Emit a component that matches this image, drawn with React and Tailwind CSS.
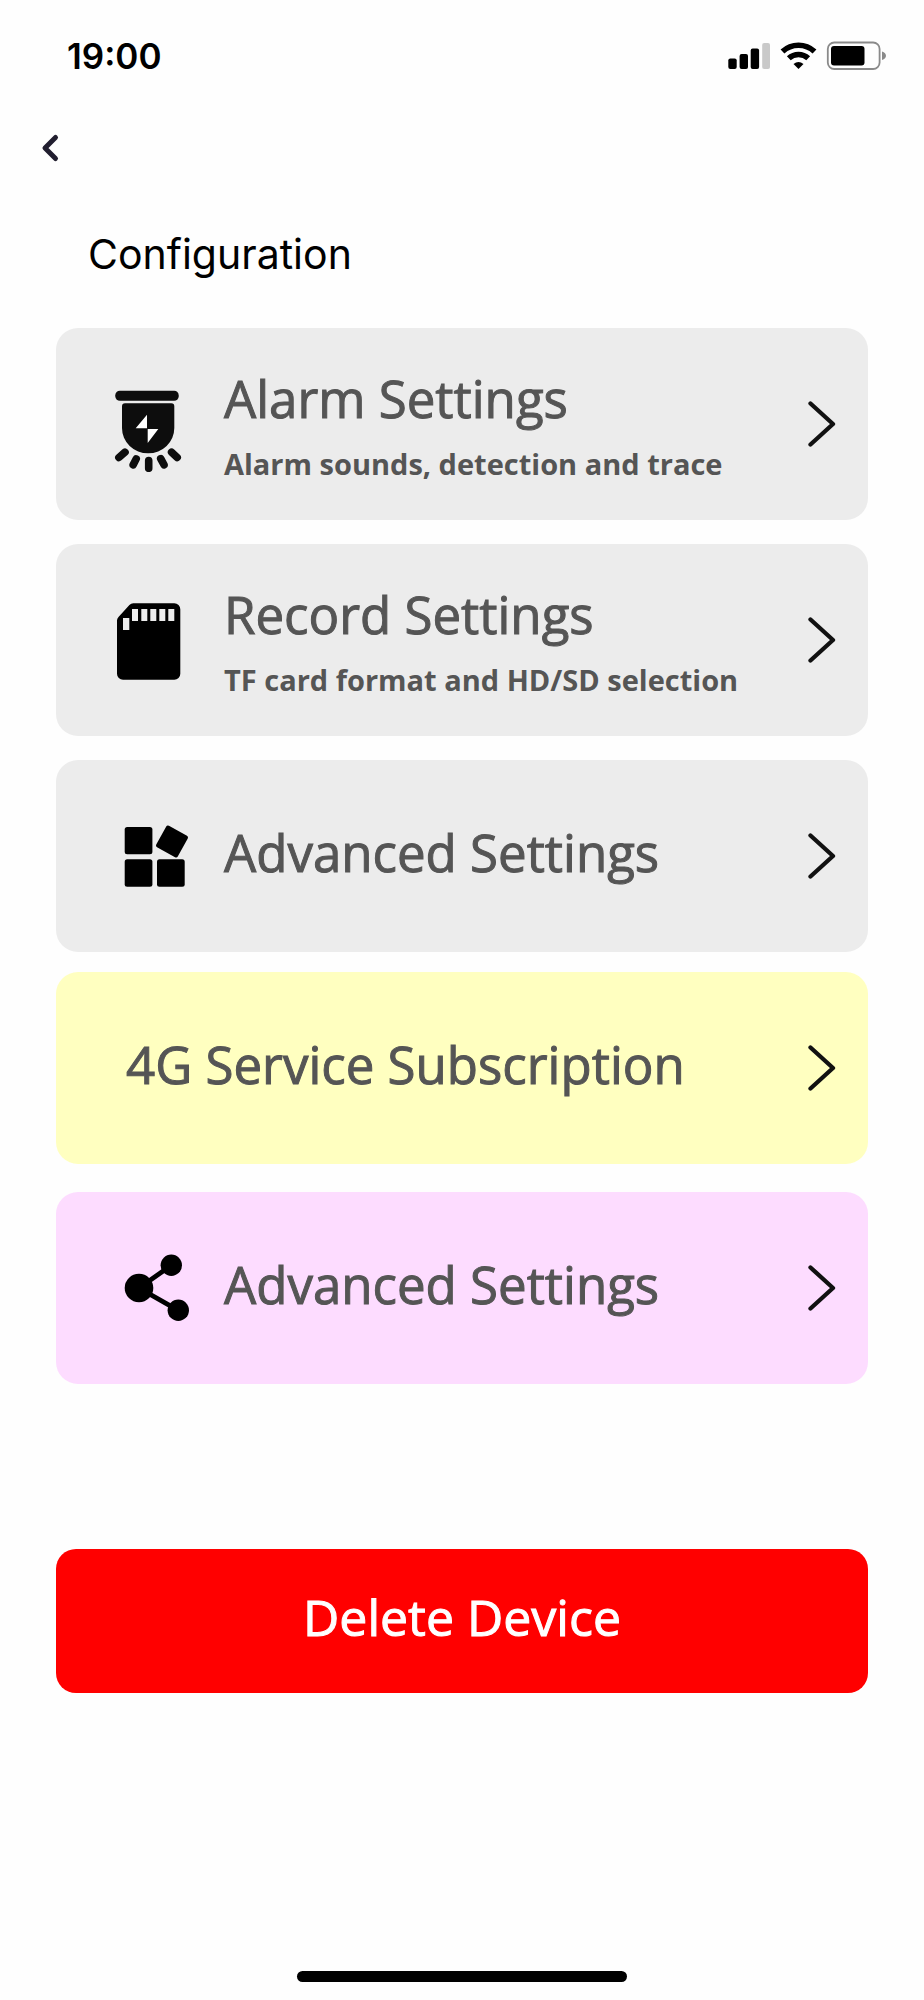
import React from "react";
import clsx from "clsx";

const AlarmIcon = () => (
  <svg viewBox="0 0 80 96" className="h-24 w-20 shrink-0" aria-hidden="true">
    <rect x="3.3" y="14.7" width="63.4" height="10" rx="4.5" fill="#0d0d0d" />
    <path
      d="M13 27.3H59.3a3 3 0 0 1 3 3V52a26.1 25.3 0 0 1-52.3 0V30.3a3 3 0 0 1 3-3Z"
      fill="#0d0d0d"
    />
    <path d="M35 38.7V52.3H23.7ZM35.7 53H46.3L35.7 67Z" fill="#fff" />
    <path
      d="M13 76.2 6.9 81.5M24.2 82.9 21.2 88.8M36.7 84.6V92.3M48.7 82.6 52 88.8M59.6 76.2 65.2 81.5"
      stroke="#0d0d0d"
      strokeWidth="7.6"
      strokeLinecap="round"
    />
  </svg>
);

const CardIcon = () => (
  <svg viewBox="0 0 80 96" className="h-24 w-20 shrink-0" aria-hidden="true">
    <path
      d="M21.5 11.3H62.3a6 6 0 0 1 6 6V81.7a6 6 0 0 1-6 6H11a6 6 0 0 1-6-6V28.5a5 5 0 0 1 1.5-3.6L17.4 13a5.5 5.5 0 0 1 4.1-1.7Z"
      fill="#000"
    />
    <path
      d="M11 26h6.3v12H11ZM20 17h6v12h-6ZM29.3 17h6v12h-6ZM38.3 17h6v12h-6ZM47.3 17h6v12h-6ZM56.3 17h6v12h-6Z"
      fill="#ececec"
    />
  </svg>
);

const GridIcon = () => (
  <svg viewBox="0 0 80 96" className="h-24 w-20 shrink-0" aria-hidden="true">
    <rect x="12.7" y="19" width="27.7" height="27.3" rx="2.5" />
    <rect x="12.7" y="51.3" width="27.7" height="27.5" rx="2.5" />
    <rect x="45" y="51.3" width="27.7" height="27.5" rx="2.5" />
    <rect
      x="47.7"
      y="21.2"
      width="24.6"
      height="24.6"
      rx="2"
      transform="rotate(29 60 33.5)"
    />
  </svg>
);

const ShareIcon = () => (
  <svg viewBox="0 0 80 96" className="h-24 w-20 shrink-0" aria-hidden="true">
    <path d="M59.3 25.3 27 48 66.3 70.3" fill="none" stroke="#000" strokeWidth="4.8" />
    <circle cx="27" cy="48" r="14.3" />
    <circle cx="59.3" cy="25.3" r="10.7" />
    <circle cx="66.3" cy="70.3" r="10.7" />
  </svg>
);

const ChevronIcon = () => (
  <svg viewBox="0 0 28 48" className="ml-auto h-12 w-7 shrink-0" aria-hidden="true">
    <path
      d="M2.5 3.5 25 24 2.5 44.5"
      fill="none"
      stroke="#111"
      strokeWidth="4.3"
      strokeLinecap="round"
      strokeLinejoin="round"
    />
  </svg>
);

const StatusIcons = () => (
  <svg viewBox="0 0 160 32" className="h-8 w-40" aria-hidden="true">
    <rect x="2.3" y="18.5" width="8.4" height="10.5" rx="2" />
    <rect x="13.6" y="14" width="8.4" height="15" rx="2" />
    <rect x="24.7" y="8.5" width="8.4" height="20.5" rx="2" />
    <rect x="36.2" y="3" width="7.8" height="26" rx="2" fill="#c9c9c9" />
    <path
      d="M56.5 11.5a23.5 23.5 0 0 1 32 0M62.8 18.3a14.3 14.3 0 0 1 19.4 0"
      fill="none"
      stroke="#000"
      strokeWidth="5.6"
    />
    <path d="M67.5 24a8 8 0 0 1 10 0L72.5 29Z" />
    <rect
      x="101.8"
      y="2.5"
      width="51.8"
      height="26.5"
      rx="6.5"
      fill="none"
      stroke="#8a8a8a"
      strokeWidth="1.8"
    />
    <rect x="105" y="6" width="33.5" height="19.5" rx="3" />
    <path d="M156 11.5c5.3 1.5 5.3 7 0 8.5Z" fill="#8a8a8a" />
  </svg>
);

const deviceItems = [
  { title: "Alarm Settings", desc: "Alarm sounds, detection and trace", icon: AlarmIcon },
  { title: "Record Settings", desc: "TF card format and HD/SD selection", icon: CardIcon },
  { title: "Advanced Settings", icon: GridIcon },
];

const serviceItems = [
  { title: "4G Service Subscription", color: "bg-[#ffffc0]" },
  { title: "Advanced Settings", icon: ShareIcon, color: "bg-[#fddcff]" },
];

// Open Sans has no medium weight, so titles get a thin stroke on top of regular
function SettingCard({ title, desc, icon: Icon, color = "bg-[#ececec]" }) {
  return (
    <button
      type="button"
      className={clsx(
        "flex min-h-[192px] w-full items-center gap-8 rounded-[22px] pr-8 text-left text-[#555]",
        Icon ? "pl-14" : "pl-[70px]",
        color
      )}
    >
      {Icon && <Icon />}
      <span className={clsx("flex flex-col gap-5", desc ? "pb-1" : "pb-2")}>
        <span className="text-[51px] leading-[64px] [-webkit-text-stroke:1px_#555]">{title}</span>
        {desc && <span className="text-[29px] leading-7 font-bold">{desc}</span>}
      </span>
      <ChevronIcon />
    </button>
  );
}

export default function App() {
  return (
    <div className="flex min-h-screen flex-col bg-[#fefefe] font-['Open_Sans','Noto_Sans',sans-serif]">
      <header className="font-['Inter',sans-serif] text-black">
        <div className="flex items-center justify-between pt-8 pr-[38px] pl-[67px]">
          <span className="text-[35px] leading-[48px] font-semibold">19:00</span>
          <StatusIcons />
        </div>
        <button type="button" aria-label="Back" className="mt-12 ml-8 block p-1">
          <svg viewBox="0 0 32 32" className="size-8" aria-hidden="true">
            <path
              d="M19.5 5.5 9 16 19.5 26.5"
              fill="none"
              stroke="#211e2f"
              strokeWidth="5"
              strokeLinecap="round"
              strokeLinejoin="round"
            />
          </svg>
        </button>
        <h1 className="mt-14 pl-[88px] text-[41px] leading-[60px] font-normal">Configuration</h1>
      </header>

      <main className="flex flex-col px-14 pt-11">
        <div className="flex flex-col gap-6">
          {deviceItems.map((item) => (
            <SettingCard key={item.title} {...item} />
          ))}
        </div>
        <div className="mt-5 flex flex-col gap-7">
          {serviceItems.map((item) => (
            <SettingCard key={item.title} {...item} />
          ))}
        </div>
        <button
          type="button"
          className="mt-[165px] rounded-[20px] bg-[#ff0000] pt-9 pb-11 text-[50px] leading-[64px] text-white [-webkit-text-stroke:1px_#fff]"
        >
          Delete Device
        </button>
      </main>

      <div className="mt-auto flex justify-center pt-10 pb-[18px]">
        <div className="h-[11px] w-[330px] rounded-full bg-black" />
      </div>
    </div>
  );
}
